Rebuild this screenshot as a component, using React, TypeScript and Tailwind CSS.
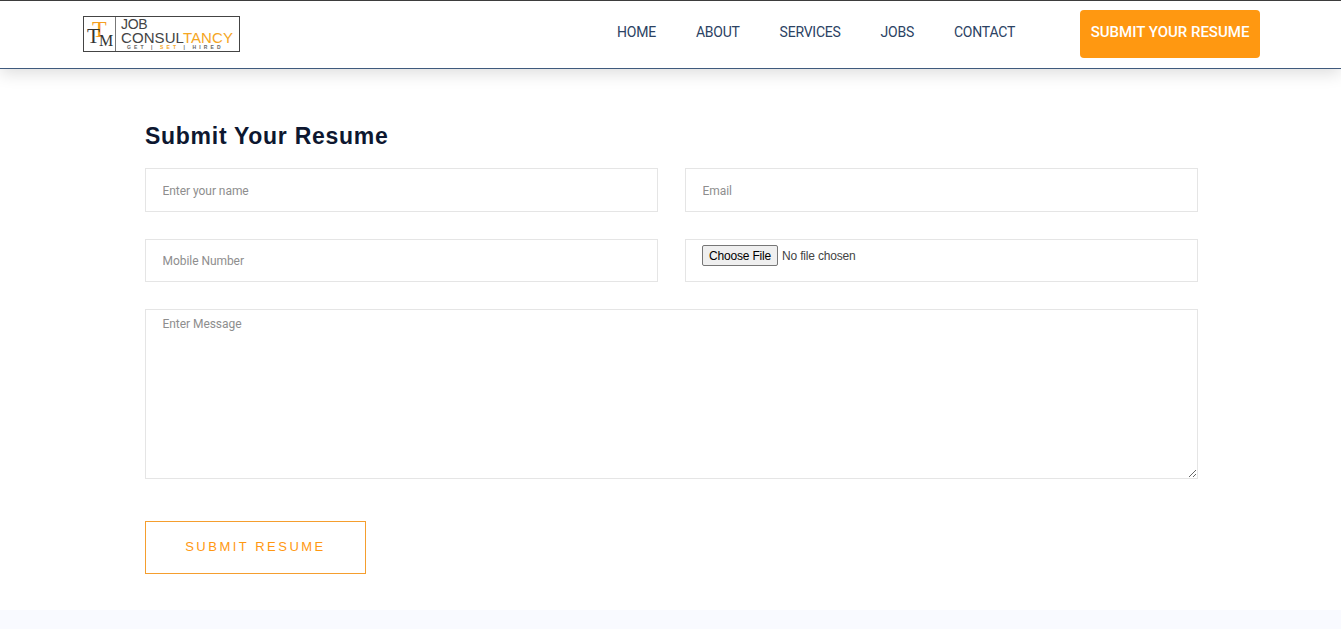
const navItems = ['HOME', 'ABOUT', 'SERVICES', 'JOBS', 'CONTACT']

const fieldClass =
  "h-[44px] w-full border border-[#e5e5e5] bg-white px-[16.5px] font-['Roboto',sans-serif] text-[12px] tracking-[-0.05px] text-[#333] placeholder:text-[#8e8e8e] outline-none"

function Logo() {
  return (
    <div className="flex h-[36px] w-[157px] items-stretch border border-[#444] bg-white">
      <div className="relative w-[32px] shrink-0 border-r border-[#777]">
        <span className="absolute left-[8px] top-[1px] font-['Liberation_Serif',serif] text-[24px] leading-[22px] text-[#f59e1f]">T</span>
        <span className="absolute left-[3px] top-[7px] font-['Liberation_Serif',serif] text-[21px] leading-[24px] text-[#333]">T</span>
        <span className="absolute left-[15px] top-[14px] font-['Liberation_Serif',serif] text-[16px] leading-[20px] text-[#333]">M</span>
      </div>
      <div className="flex flex-col pl-[5px] pt-[2px] font-['Liberation_Sans',sans-serif] text-[#444]">
        <span className="text-[14px] leading-[11px] tracking-[-0.3px]">JOB</span>
        <span className="mt-[1px] whitespace-nowrap text-[15px] leading-[13px] tracking-[0.08px]">
          CONSUL<span className="text-[#f5a623]">TANCY</span>
        </span>
        <span className="ml-[6px] mt-[1px] whitespace-nowrap text-[5px] font-bold leading-[5px] tracking-[3.1px] text-[#666]">
          GET | <span className="text-[#f5a623]">SET</span> | HIRED
        </span>
      </div>
    </div>
  )
}

export default function App() {
  return (
    <div className="min-h-[629px] bg-white font-['Roboto',sans-serif]">
      <header className="relative z-10 flex h-[69px] items-center border-t border-b border-t-[#3d3d3d] border-b-[#3f5a7d] bg-white pb-[2px] pl-[83px] pr-[81px] shadow-[0_4px_16px_rgba(0,0,0,0.14)]">
        <Logo />
        <nav className="ml-auto flex gap-[40px] pb-[3px] text-[14px] tracking-[-0.24px] text-[#2b4263]">
          {navItems.map(item => (
            <a key={item} href="#">{item}</a>
          ))}
        </nav>
        <a href="#" className="ml-[65px] flex h-[48px] w-[180px] items-center justify-center rounded-[4px] bg-[#ff9811] pb-[2px] text-[15px] font-medium text-white">
          SUBMIT YOUR RESUME
        </a>
      </header>

      <main className="ml-[145px] w-[1053px] pb-[36px] pt-[53px]">
        <h1 className="font-['Liberation_Sans',sans-serif] text-[23px] font-bold leading-[28px] tracking-[0.72px] text-[#0d1730]">
          Submit Your Resume
        </h1>
        <form className="mt-[18px]">
          <div className="grid grid-cols-2 gap-x-[27px] gap-y-[27px]">
            <input className={`${fieldClass} pt-[2px]`} placeholder="Enter your name" />
            <input className={`${fieldClass} pt-[2px]`} placeholder="Email" />
            <input className={`${fieldClass} !h-[43px]`} placeholder="Mobile Number" />
            <div className="h-[43px] border border-[#e5e5e5] pl-[16px] pt-[5px]">
              <input
                type="file"
                className="block font-['Liberation_Sans',sans-serif] text-[12px] leading-[20px] tracking-[-0.18px] text-[#444] file:mr-[4px] file:h-[21px] file:rounded-[2px] file:border file:border-solid file:border-[#767676] file:bg-[#efefef] file:px-[6px] file:text-[12px] file:tracking-[-0.18px] file:text-black"
              />
            </div>
          </div>
          <textarea
            className={`${fieldClass} mt-[27px] block !h-[170px] pt-[5px]`}
            placeholder="Enter Message"
          />
          <button
            type="button"
            className="mt-[42px] h-[53px] w-[221px] border border-[#f59e2e] bg-white pb-[2px] font-['Liberation_Sans',sans-serif] text-[13px] tracking-[2.5px] text-[#ff9811]"
          >
            SUBMIT RESUME
          </button>
        </form>
      </main>

      <footer className="h-[19px] bg-[#f9faff]" />
    </div>
  )
}
